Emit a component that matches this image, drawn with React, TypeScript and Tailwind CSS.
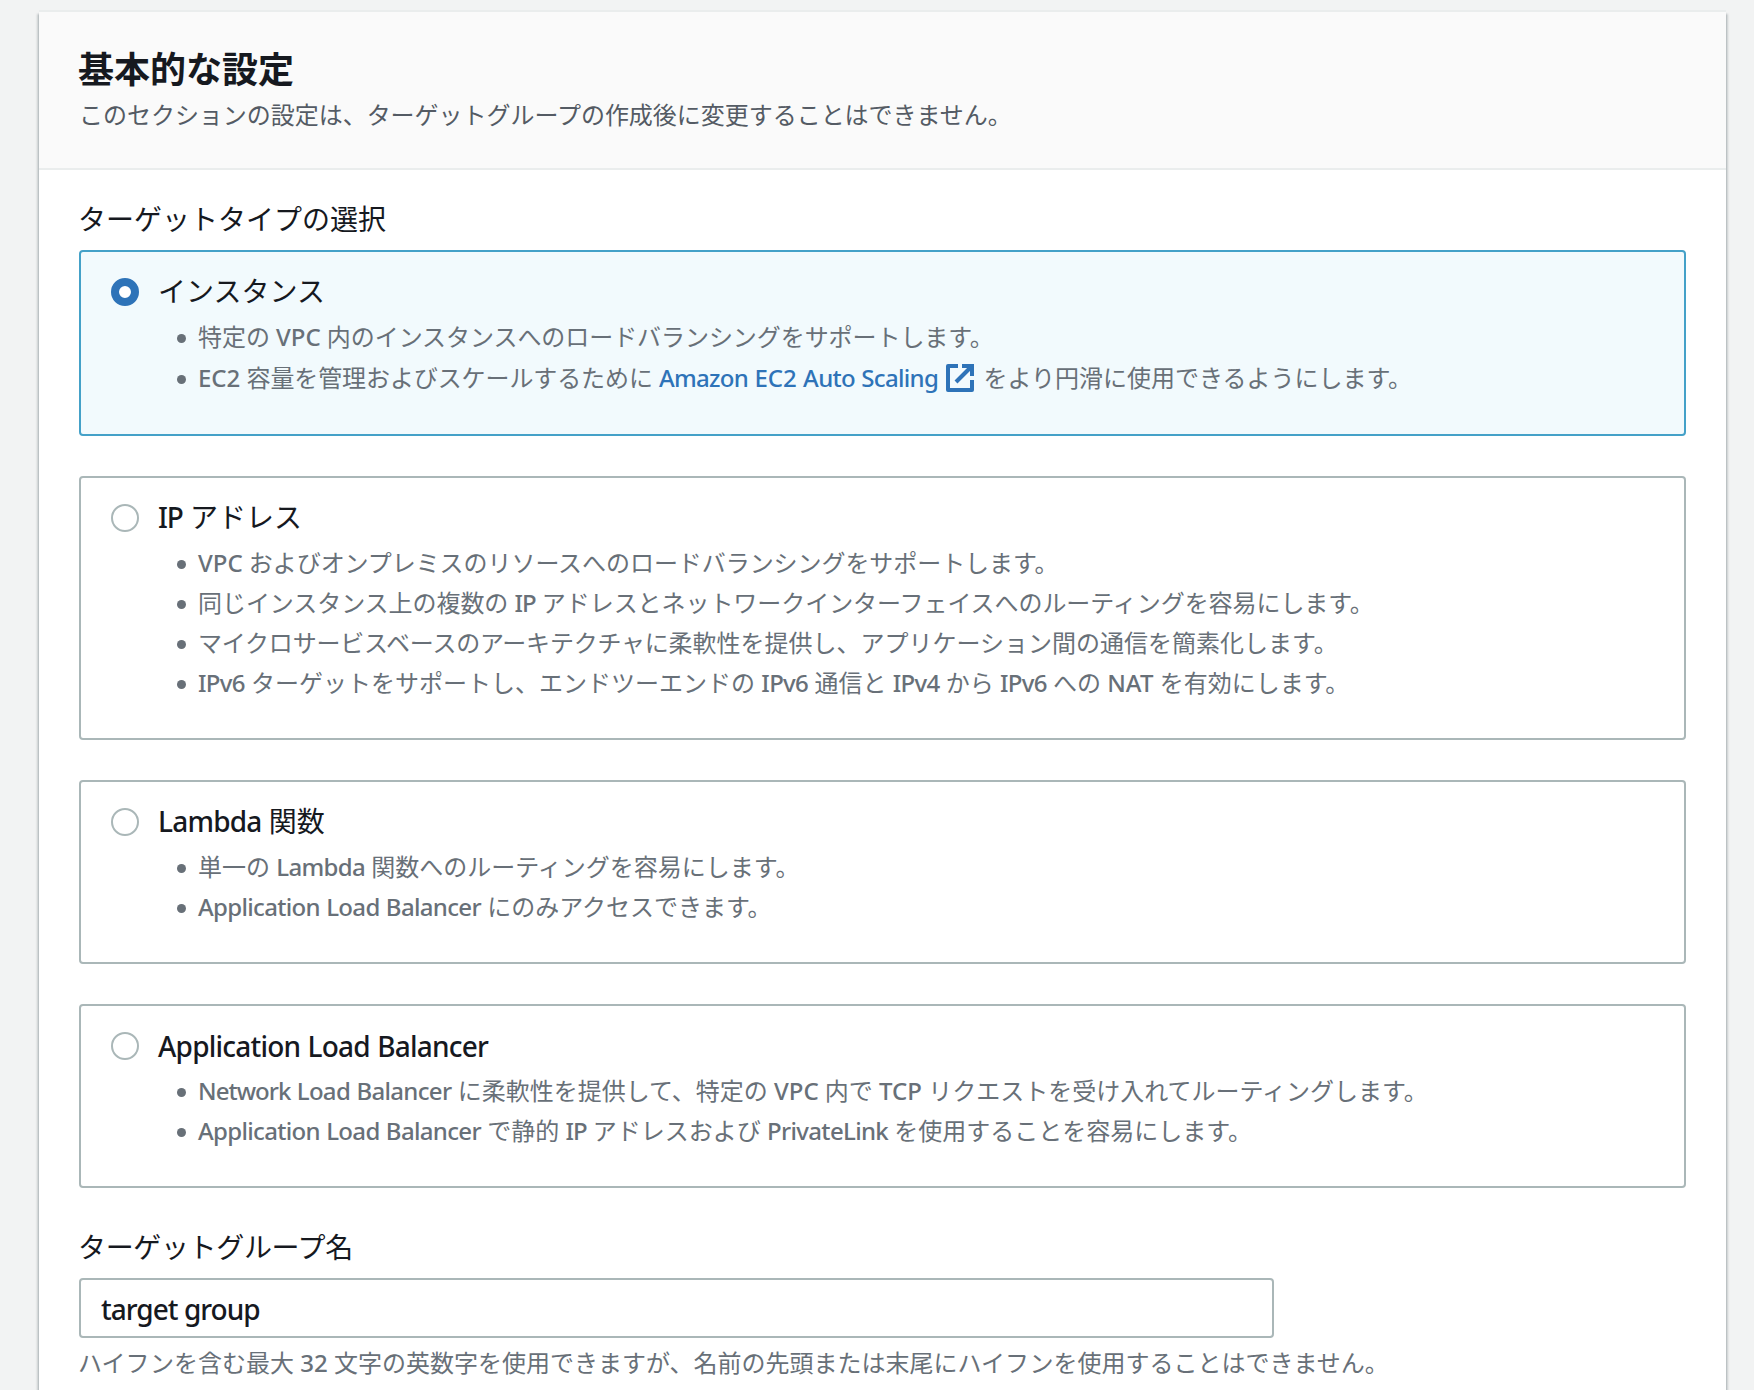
import { ReactNode, useState } from 'react';

interface TargetType {
  id: string;
  title: string;
  points: ReactNode[];
}

// Latin words are set a little heavier and tighter than the kana around them
function Mixed({ children }: { children: string }) {
  const parts = children.split(/([A-Za-z0-9]+)/);

  const tracking = (word: string) => {
    if (word === 'IP') return 'tracking-[-0.04em]';
    if (word === 'Network') return 'tracking-[-0.04em]';
    return /[a-z]/.test(word) ? 'tracking-[-0.028em]' : 'tracking-normal';
  };

  return (
    <>
      {parts.map((part, i) =>
        i % 2 === 1 ? (
          <span key={i} className={`font-medium ${tracking(part)}`}>{part}</span>
        ) : (
          part
        )
      )}
    </>
  );
}

function ExternalIcon() {
  return (
    <svg className="inline-block w-7 h-7 ml-2 mr-[3px] align-[-5px]" viewBox="0 0 28 28" fill="none" stroke="currentColor" strokeWidth="4">
      <path d="M12 2H2V26H26V16" strokeLinejoin="round" />
      <path d="M16 2H26V12" />
      <path d="M26 2L10 18" />
    </svg>
  );
}

const targetTypes: TargetType[] = [
  {
    id: 'instance',
    title: 'インスタンス',
    points: [
      <span className="tracking-[-0.06px]">
        <Mixed>特定の VPC 内のインスタンスへのロードバランシングをサポートします。</Mixed>
      </span>,
      <>
        <span className="tracking-[-0.1px]">
          <Mixed>EC2 容量を管理およびスケールするために </Mixed>
        </span>
        <a href="#" className="text-[#2e73b8]">
          <Mixed>Amazon EC2 Auto Scaling</Mixed>
          <ExternalIcon />
        </a>
        {' をより円滑に使用できるようにします。'}
      </>
    ]
  },
  {
    id: 'ip',
    title: 'IP アドレス',
    points: [
      <span className="tracking-[-0.06px]">
        <Mixed>VPC およびオンプレミスのリソースへのロードバランシングをサポートします。</Mixed>
      </span>,
      <span className="tracking-[-0.06px]">
        <Mixed>同じインスタンス上の複数の IP アドレスとネットワークインターフェイスへのルーティングを容易にします。</Mixed>
      </span>,
      <>
        <span className="tracking-[-0.22px]">マイクロサービスベースのアーキテクチャに</span>
        柔軟性を提供し、アプリケーション間の通信を簡素化します。
      </>,
      <Mixed>IPv6 ターゲットをサポートし、エンドツーエンドの IPv6 通信と IPv4 から IPv6 への NAT を有効にします。</Mixed>
    ]
  },
  {
    id: 'lambda',
    title: 'Lambda 関数',
    points: [
      <Mixed>単一の Lambda 関数へのルーティングを容易にします。</Mixed>,
      <Mixed>Application Load Balancer にのみアクセスできます。</Mixed>
    ]
  },
  {
    id: 'alb',
    title: 'Application Load Balancer',
    points: [
      <Mixed>Network Load Balancer に柔軟性を提供して、特定の VPC 内で TCP リクエストを受け入れてルーティングします。</Mixed>,
      <Mixed>Application Load Balancer で静的 IP アドレスおよび PrivateLink を使用することを容易にします。</Mixed>
    ]
  }
];

function Tile({ type, selected, onSelect }: { type: TargetType; selected: boolean; onSelect: () => void }) {
  return (
    <div
      onClick={onSelect}
      className={`border-2 rounded-[4px] pl-[30px] pt-[18px] pb-[35px] ${
        selected ? 'border-[#44a1c8] bg-[#f2fafd]' : 'border-[#aab7b8] bg-white'
      }`}
    >
      <div className="flex items-center gap-[19px] h-11">
        <span
          className={`w-7 h-7 rounded-full bg-white shrink-0 ${
            selected ? 'border-8 border-[#2e73b8]' : 'border-2 border-[#aab7b8]'
          }`}
        />
        <span className={`text-[28px] leading-[44px] text-[#16191f] ${type.id === 'alb' ? '' : 'mb-0.5'}`}>
          <Mixed>{type.title}</Mixed>
        </span>
      </div>
      <ul className="mt-[3px] pl-[66px] text-2xl text-[#687078]">
        {type.points.map((point, i) => (
          <li key={i} className={`flex items-center whitespace-nowrap ${selected && i === 1 ? 'h-[42px]' : 'h-10'}`}>
            <span className="w-[9px] h-[9px] mt-[3px] mr-[12px] rounded-full bg-[#687078] shrink-0" />
            <span className="leading-10">{point}</span>
          </li>
        ))}
      </ul>
    </div>
  );
}

export default function App() {
  const [selected, setSelected] = useState('instance');
  const [name, setName] = useState('target group');

  return (
    <div className="h-[1390px] overflow-hidden bg-[#f2f3f3] pt-3 pl-[39px] pr-7 font-['Noto_Sans','Noto_Sans_CJK_JP',sans-serif]">
      <div className="h-[1400px] bg-white shadow-[0_-2px_0_#eaeded,0_2px_2px_rgba(0,28,36,0.3),2px_2px_2px_rgba(0,28,36,0.15),-2px_2px_2px_rgba(0,28,36,0.15)]">
        {/* Header */}
        <div className="h-[158px] px-10 pt-8 bg-[#fafafa] border-b-2 border-[#eaeded]">
          <h2 className="-ml-px text-[36px] leading-[52px] font-bold text-[#16191f]">基本的な設定</h2>
          <p className="text-2xl leading-[38px] text-[#545b64] tracking-[-0.03px]">
            このセクションの設定は、ターゲットグループの作成後に変更することはできません。
          </p>
        </div>

        <div className="px-10 pt-[27px]">
          {/* Target type */}
          <div className="-ml-px h-[53px] text-[28px] leading-[44px] text-[#16191f]">ターゲットタイプの選択</div>
          <div className="flex flex-col gap-10">
            {targetTypes.map((type) => (
              <Tile key={type.id} type={type} selected={selected === type.id} onSelect={() => setSelected(type.id)} />
            ))}
          </div>

          {/* Name */}
          <div className="-ml-px mt-[37px] h-[53px] text-[28px] leading-[44px] text-[#16191f] tracking-[-0.35px]">
            ターゲットグループ名
          </div>
          <input
            value={name}
            onChange={(e) => setName(e.target.value)}
            className="block w-[1195px] h-[60px] px-5 pt-0.5 border-2 border-[#aab7b8] rounded-[4px] text-[28px] font-medium tracking-[-0.035em] text-[#16191f] bg-white outline-none"
          />
          <p className="-ml-px mt-[5px] text-2xl leading-10 text-[#687078] whitespace-nowrap">
            <Mixed>ハイフンを含む最大 32 文字の英数字を使用できますが、名前の先頭または末尾にハイフンを使用することはできません。</Mixed>
          </p>
        </div>
      </div>
    </div>
  );
}
